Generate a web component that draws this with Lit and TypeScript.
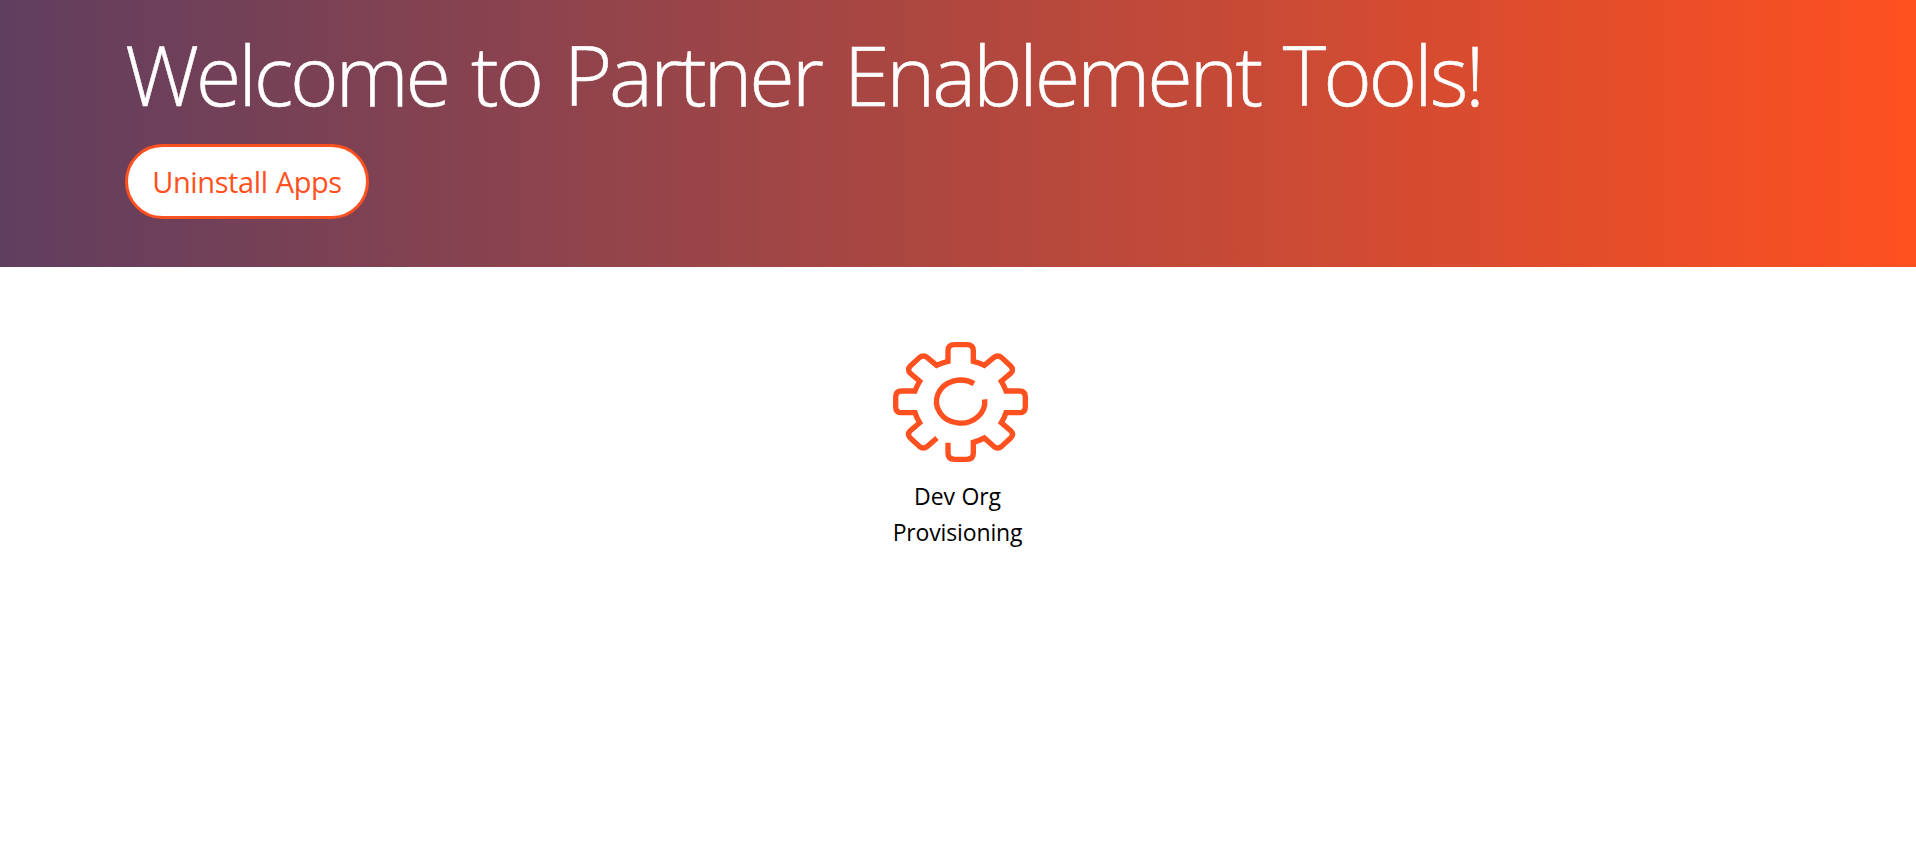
import { LitElement, html, css } from "lit";
import { customElement } from "lit/decorators.js";

@customElement("gear-icon")
class GearIcon extends LitElement {
  static styles = css`
    :host { display: block; width: 135px; height: 120px; }
    svg { display: block; width: 100%; height: 100%; }
    path { fill: none; stroke: #ff5020; stroke-width: 16; }
  `;
  render() {
    return html`<svg viewBox="39 36 405 360" aria-hidden="true">
      <path d="M204 338V370Q204 388 224 388H260Q280 388 280 370V337Q297 332 313 324L341 349Q353 359 365 349L392 324Q403 313 392 302L364 278Q373 264 378 248H418Q436 248 436 230V201Q436 183 418 183H378Q373 168 364 154L392 130Q403 119 392 108L365 83Q353 73 341 83L313 106Q297 98 280 94V62Q280 44 260 44H224Q204 44 204 62V94Q187 98 170 106L142 83Q130 73 118 83L91 108Q80 119 91 130L119 154Q110 168 105 183H65Q47 183 47 201V230Q47 248 65 248H105Q110 264 119 278L91 302Q80 313 91 324L118 349Q130 359 142 349L171 324" />
      <path d="M314 208A72.500 64.500 0 1 1 282 161" />
    </svg>`;
  }
}

@customElement("app-root")
class AppRoot extends LitElement {
  static styles = css`
    :host {
      display: block;
      min-height: 861px;
      background: #fff;
      font-family: "Segoe UI", "Open Sans", "Noto Sans", sans-serif;
    }
    .banner {
      box-sizing: border-box;
      height: 267px;
      padding: 20px 125px 0;
      background: linear-gradient(to right, #603e5f, #ff5020);
    }
    h1 {
      margin: 0;
      height: 124px;
      line-height: 108px;
      font-size: 83px;
      font-weight: 300;
      letter-spacing: -3.2px;
      word-spacing: 4.5px;
      -webkit-text-stroke: 0.5px #fff;
      color: #fff;
      white-space: nowrap;
    }
    button {
      display: block;
      box-sizing: border-box;
      width: 244px;
      height: 75px;
      padding: 0;
      border: 3px solid #ff5020;
      border-radius: 38px;
      background: #fff;
      color: #ff5020;
      font-family: inherit;
      font-size: 29px;
      font-weight: 400;
      letter-spacing: -0.4px;
      word-spacing: 1px;
      white-space: nowrap;
    }
    .tools { display: flex; justify-content: center; padding-top: 75px; }
    .tool { display: flex; flex-direction: column; align-items: center; width: 135px; margin-left: 5px; }
    .label {
      margin-top: 16px;
      width: 140px;
      margin-left: -6px;
      text-align: center;
      font-size: 23px;
      letter-spacing: -0.15px;
      word-spacing: 1px;
      line-height: 36px;
      color: #000;
    }
  `;
  render() {
    return html`
      <header class="banner">
        <h1>Welcome to Partner Enablement Tools!</h1>
        <button>Uninstall Apps</button>
      </header>
      <main class="tools">
        <div class="tool">
          <gear-icon></gear-icon>
          <div class="label">Dev Org Provisioning</div>
        </div>
      </main>
    `;
  }
}
